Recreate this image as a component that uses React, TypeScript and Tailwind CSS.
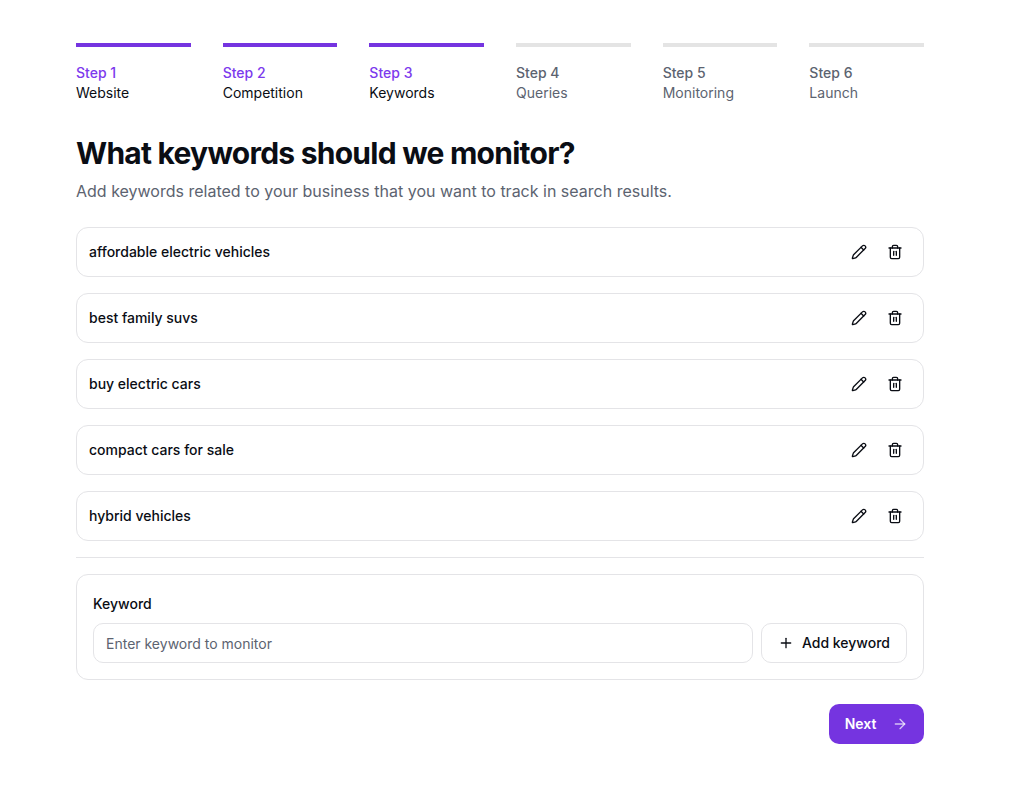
import { Pencil, Trash2, Plus, ArrowRight } from "lucide-react";

const steps = [
  { n: "Step 1", label: "Website", done: true },
  { n: "Step 2", label: "Competition", done: true },
  { n: "Step 3", label: "Keywords", done: true },
  { n: "Step 4", label: "Queries", done: false },
  { n: "Step 5", label: "Monitoring", done: false },
  { n: "Step 6", label: "Launch", done: false },
];

const keywords = [
  "affordable electric vehicles",
  "best family suvs",
  "buy electric cars",
  "compact cars for sale",
  "hybrid vehicles",
];

export default function App() {
  return (
    <div className="min-h-[796px] bg-white font-['Inter',sans-serif] text-[#0a0d14]">
      <div className="ml-[76px] w-[848px] pt-[43px]">
        <div className="flex gap-8">
          {steps.map((s) => (
            <div key={s.n} className="flex-1">
              <div className={`h-1 ${s.done ? "bg-[#7534e0]" : "bg-[#e4e4e4]"}`} />
              <div className="pt-4 text-sm leading-5">
                <div className={`font-medium ${s.done ? "text-[#7c3aed]" : "text-[#5c6370]"}`}>{s.n}</div>
                <div className={s.done ? "text-[#0a0d14]" : "text-[#5c6370]"}>{s.label}</div>
              </div>
            </div>
          ))}
        </div>

        <h1 className="mt-8 text-3xl leading-9 font-bold tracking-[-0.75px]">What keywords should we monitor?</h1>
        <p className="mt-2 text-base leading-6 text-[#5c6370]">
          Add keywords related to your business that you want to track in search results.
        </p>

        <div className="mt-6 flex flex-col gap-4">
          {keywords.map((k) => (
            <div key={k} className="flex h-[50px] items-center justify-between rounded-xl border border-[#e4e4e7] pl-3 pr-2.5">
              <span className="text-sm font-medium">{k}</span>
              <div className="flex items-center">
                <span className="flex size-9 items-center justify-center"><Pencil size={16} strokeWidth={2} /></span>
                <span className="flex size-9 items-center justify-center"><Trash2 size={16} strokeWidth={2} /></span>
              </div>
            </div>
          ))}
        </div>

        <div className="mt-4 h-px bg-[#e4e4e7]" />

        <div className="mt-4 rounded-xl border border-[#e4e4e7] px-4 pt-5 pb-4">
          <label className="block text-sm leading-[18px] font-medium">Keyword</label>
          <div className="mt-2.5 flex gap-2">
            <div className="flex h-10 flex-1 items-center rounded-[10px] border border-[#e4e4e7] px-3 pt-0.5 text-sm text-[#5c6370]">
              Enter keyword to monitor
            </div>
            <button className="flex h-10 w-[146px] items-center justify-center gap-2 rounded-[10px] border border-[#e4e4e7] bg-white text-sm font-medium">
              <Plus size={16} strokeWidth={2} />
              Add keyword
            </button>
          </div>
        </div>

        <div className="mt-6 flex justify-end">
          <button className="flex h-10 w-[95px] items-center justify-center gap-4 rounded-[10px] bg-[#7534e0] text-sm font-semibold text-white">
            Next
            <ArrowRight size={16} strokeWidth={2} className="text-white/70" />
          </button>
        </div>
      </div>
    </div>
  );
}
